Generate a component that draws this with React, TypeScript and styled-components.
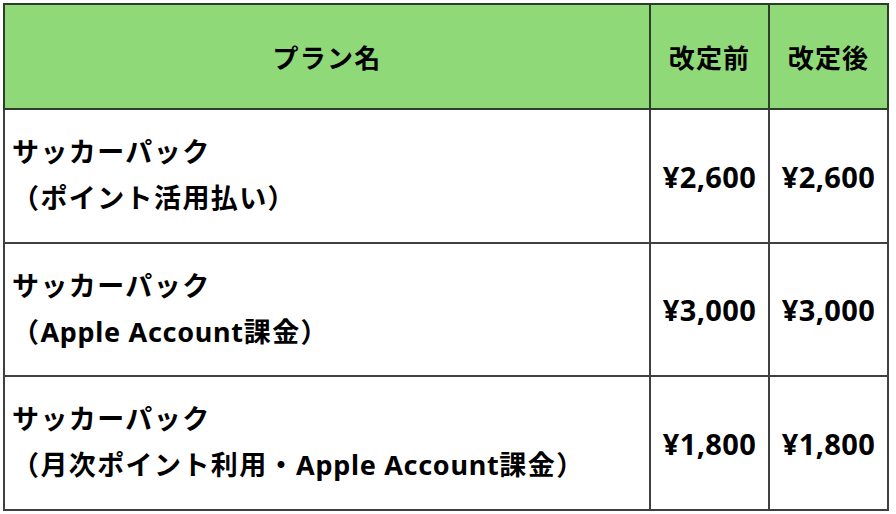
import React from 'react'
import styled, { createGlobalStyle } from 'styled-components'

const GlobalStyle = createGlobalStyle`
  html, body {
    margin: 0;
    padding: 0;
    background: #ffffff;
  }
  body {
    font-family: "Noto Sans", "Noto Sans CJK JP", sans-serif;
    color: #000000;
  }
`

const Page = styled.div`
  padding: 3px;
`

const Table = styled.div`
  display: flex;
  flex-direction: column;
  width: 886px;
`

const HeaderRow = styled.div`
  display: grid;
  grid-template-columns: 644px 117px 117px;
  grid-template-rows: 103px;
  gap: 2px;
  padding: 2px;
  background: #2f3b2b;
`

const Body = styled.div`
  display: grid;
  grid-template-columns: 644px 117px 117px;
  grid-template-rows: 132px 131px 132px;
  gap: 2px;
  padding: 0 2px 2px 2px;
  background: #404040;
`

const HeadCell = styled.div`
  display: flex;
  align-items: center;
  justify-content: center;
  background: #8fd978;
  font-size: 26px;
  font-weight: 700;
  letter-spacing: 1.2px;
`

const PlanCell = styled.div`
  display: flex;
  flex-direction: column;
  justify-content: center;
  padding-left: 7px;
  padding-bottom: 2px;
  background: #ffffff;
  font-size: 27px;
  font-weight: 700;
  letter-spacing: 1.4px;
  line-height: 46px;
  white-space: nowrap;
`

const Latin = styled.span`
  letter-spacing: 0.7px;
`

const PriceCell = styled.div`
  display: flex;
  align-items: center;
  justify-content: center;
  background: #ffffff;
  font-size: 29px;
  font-weight: 700;
  letter-spacing: 0.4px;
`

type Plan = { name: string; note: React.ReactNode; before: string; after: string }

const plans: Plan[] = [
  { name: 'サッカーパック', note: '（ポイント活用払い）', before: '¥2,600', after: '¥2,600' },
  {
    name: 'サッカーパック',
    note: <>（<Latin>Apple Account</Latin>課金）</>,
    before: '¥3,000',
    after: '¥3,000',
  },
  {
    name: 'サッカーパック',
    note: <>（月次ポイント利用・<Latin>Apple Account</Latin>課金）</>,
    before: '¥1,800',
    after: '¥1,800',
  },
]

export default function App() {
  return (
    <Page>
      <GlobalStyle />
      <Table>
        <HeaderRow>
          <HeadCell>プラン名</HeadCell>
          <HeadCell>改定前</HeadCell>
          <HeadCell>改定後</HeadCell>
        </HeaderRow>
        <Body>
          {plans.map((p, i) => (
            <React.Fragment key={i}>
              <PlanCell>
                <span>{p.name}</span>
                <span>{p.note}</span>
              </PlanCell>
              <PriceCell>{p.before}</PriceCell>
              <PriceCell>{p.after}</PriceCell>
            </React.Fragment>
          ))}
        </Body>
      </Table>
    </Page>
  )
}
